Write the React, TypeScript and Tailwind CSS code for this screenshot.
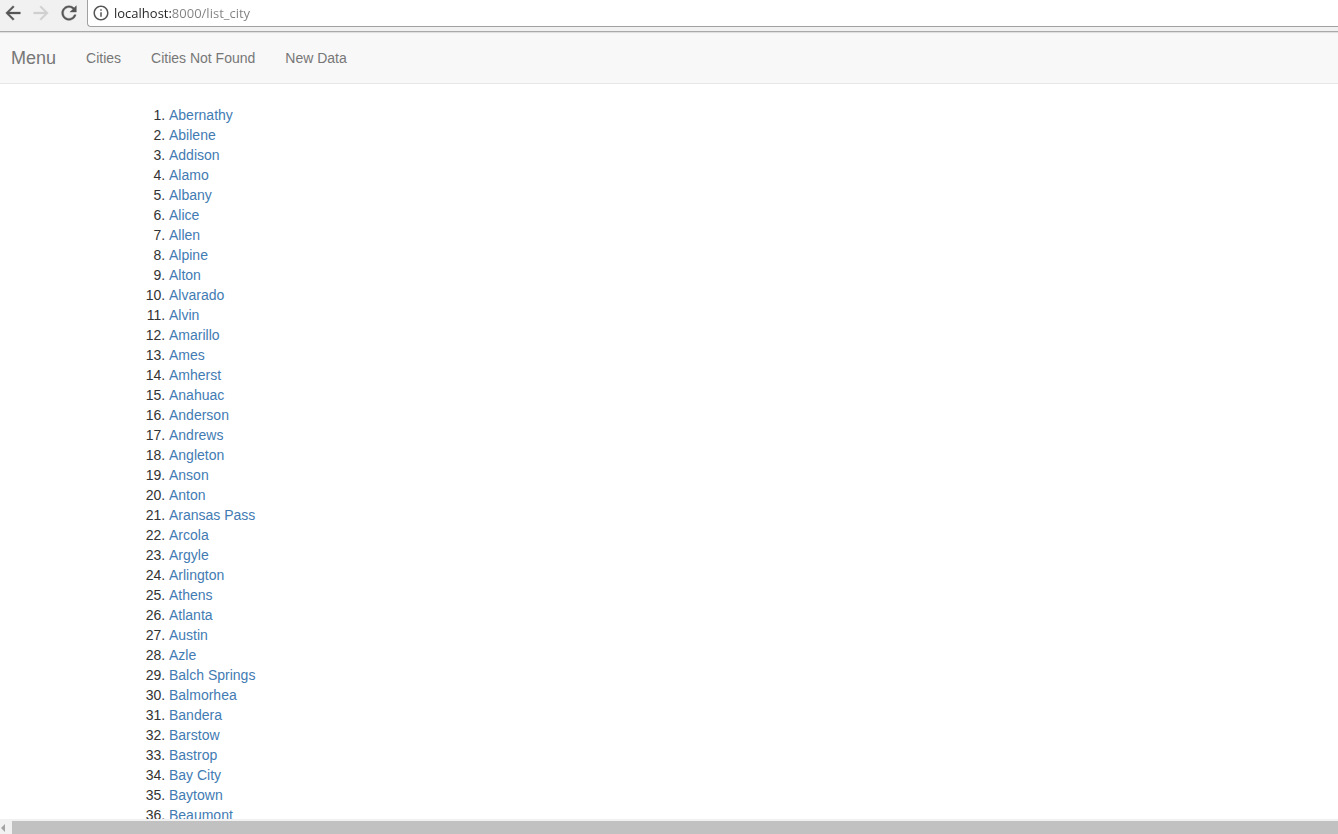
import React from "react";
import { MdInfoOutline } from "react-icons/md";

const cities: string[] = [
  "Abernathy", "Abilene", "Addison", "Alamo", "Albany", "Alice", "Allen", "Alpine", "Alton",
  "Alvarado", "Alvin", "Amarillo", "Ames", "Amherst", "Anahuac", "Anderson", "Andrews",
  "Angleton", "Anson", "Anton", "Aransas Pass", "Arcola", "Argyle", "Arlington", "Athens",
  "Atlanta", "Austin", "Azle", "Balch Springs", "Balmorhea", "Bandera", "Barstow", "Bastrop",
  "Bay City", "Baytown", "Beaumont",
];

const navLinks: string[] = ["Cities", "Cities Not Found", "New Data"];

function ToolbarIcon({ path }: { path: string }) {
  return (
    <svg
      width="22"
      height="22"
      viewBox="0 0 24 24"
      fill="currentColor"
      stroke="currentColor"
      strokeWidth="0.4"
      aria-hidden="true"
    >
      <path d={path} />
    </svg>
  );
}

function BrowserBar() {
  return (
    <header className="flex h-8 shrink-0 items-start border-b border-[#a9a9a9] bg-[#f1f1f1] text-[#555]">
      <div className="flex h-[26px] w-[87px] shrink-0 items-center gap-[6px] pl-[2px]">
        <button type="button" aria-label="Back">
          <ToolbarIcon path="M20 11H7.83l5.59-5.59L12 4l-8 8 8 8 1.41-1.41L7.83 13H20v-2z" />
        </button>
        <button type="button" aria-label="Forward" disabled className="text-[#d0d0d0]">
          <ToolbarIcon path="m12 4-1.41 1.41L16.17 11H4v2h12.17l-5.58 5.59L12 20l8-8z" />
        </button>
        <button type="button" aria-label="Reload">
          <ToolbarIcon path="M17.65 6.35A7.958 7.958 0 0 0 12 4c-4.42 0-7.99 3.58-7.99 8s3.57 8 7.99 8c3.73 0 6.84-2.55 7.73-6h-2.08A5.99 5.99 0 0 1 12 18c-3.31 0-6-2.69-6-6s2.69-6 6-6c1.66 0 3.14.69 4.22 1.78L13 11h7V4l-2.35 2.35z" />
        </button>
      </div>
      <div className="flex h-[27px] flex-1 items-center rounded-bl border-b border-l border-[#a0a0a0] bg-white pl-1">
        <MdInfoOutline size={18} className="shrink-0" />
        {/* The host part of the address is darker than the rest */}
        <input
          type="text"
          aria-label="Address"
          defaultValue="localhost:8000/list_city"
          className="ml-1 h-[26px] min-w-0 flex-1 bg-linear-to-r from-[#222] from-[57px] to-[#808080] to-[57px] bg-clip-text font-['Open_Sans','Noto_Sans',sans-serif] text-[13px] text-transparent outline-none"
        />
      </div>
    </header>
  );
}

function Navbar() {
  return (
    <nav className="flex h-[52px] shrink-0 items-center gap-[30px] border-b border-[#e7e7e7] bg-[#f8f8f8] pl-[11px] text-sm text-[#777] shadow-[inset_0_2px_1px_-1px_#dddddd]">
      <a href="#menu" className="text-lg leading-5">
        Menu
      </a>
      {navLinks.map((label) => (
        <a key={label} href="#list" className="leading-5">
          {label}
        </a>
      ))}
    </nav>
  );
}

function HorizontalScrollbar() {
  return (
    <div className="flex h-[15px] shrink-0 bg-[#f1f1f1] pt-[2px]">
      <button type="button" aria-label="Scroll left" className="flex w-3 shrink-0 items-center">
        <svg width="5" height="8" viewBox="0 0 5 8" fill="#a3a3a3" aria-hidden="true">
          <path d="M5 0v8L1 4z" />
        </svg>
      </button>
      <div className="flex-1 bg-[#c1c1c1]" />
    </div>
  );
}

export default function App() {
  return (
    <div className="flex h-screen flex-col overflow-hidden bg-white font-['Liberation_Sans',Arial,sans-serif]">
      <BrowserBar />
      <Navbar />
      <main className="min-h-0 flex-1 overflow-hidden pt-[21px]">
        <ol className="list-decimal pl-[169px] text-sm leading-5 text-[#333]">
          {cities.map((city) => (
            <li key={city}>
              <a href="#city" className="text-[#427bb3]">
                {city}
              </a>
            </li>
          ))}
        </ol>
      </main>
      <HorizontalScrollbar />
    </div>
  );
}
